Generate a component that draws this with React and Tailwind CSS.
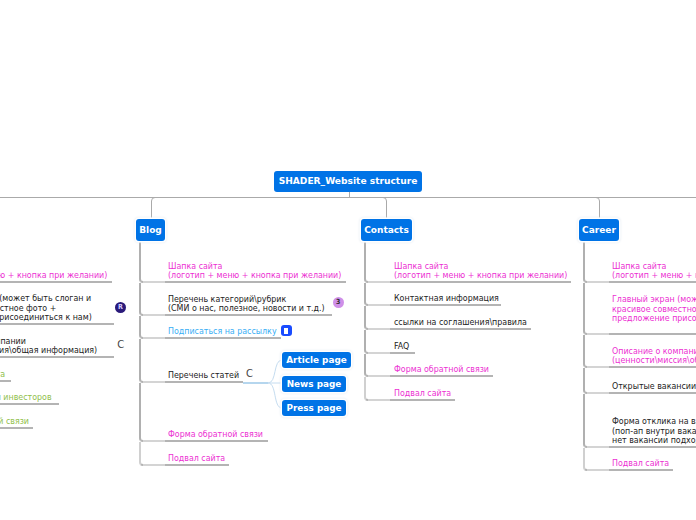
const PINK = "text-[#ec2fd2]";
const DARK = "text-[#222222]";
const BLUE = "text-[#38aef5]";
const GREEN = "text-[#8fc04a]";

const HEAD = ["Шапка сайта", "(логотип + меню + кнопка при желании)"];
const HERO = ["Главный экран (может быть слоган и", "красивое совместное фото +", "предложение присоединиться к нам)"];
const ABOUT = ["Описание о компании", "(ценности\\миссия\\общая информация)"];

// each row: underline y, underline end x, colour, lines, and a trailing mark where there is one
const branches = [
  {
    key: "home",
    t: -95,
    rows: [
      { y: 283, e: 112, c: PINK, lines: HEAD },
      { y: 325, e: 114, c: DARK, lines: HERO, mark: "R" },
      { y: 358, e: 114, c: DARK, lines: ABOUT, mark: "C2" },
      { y: 382, e: 11, c: GREEN, lines: ["Новости проекта"] },
      { y: 405, e: 59, c: GREEN, lines: ["Рекомендациям инвесторов"] },
      { y: 429, e: 33, c: GREEN, lines: ["Форма обратной связи"] },
    ],
  },
  {
    key: "blog",
    t: 139,
    rows: [
      { y: 283, e: 346, c: PINK, lines: HEAD },
      { y: 316, e: 332, c: DARK, lines: ["Перечень категорий\\рубрик", "(СМИ о нас, полезное, новости и т.д.)"], mark: "3" },
      { y: 339, e: 281, c: BLUE, lines: ["Подписаться на рассылку"], mark: "B" },
      { y: 383, e: 243, c: DARK, lines: ["Перечень статей"], mark: "C" },
      { y: 442, e: 268, c: PINK, lines: ["Форма обратной связи"] },
      { y: 466, e: 229, c: PINK, lines: ["Подвал сайта"] },
    ],
  },
  {
    key: "contacts",
    t: 364,
    wide: true,
    rows: [
      { y: 283, e: 571, c: PINK, lines: HEAD },
      { y: 306, e: 501, c: DARK, lines: ["Контактная информация"] },
      { y: 330, e: 531, c: DARK, lines: ["ссылки на соглашения\\правила"] },
      { y: 354, e: 415, c: DARK, lines: ["FAQ"] },
      { y: 377, e: 493, c: PINK, lines: ["Форма обратной связи"] },
      { y: 401, e: 455, c: PINK, lines: ["Подвал сайта"] },
    ],
  },
  {
    key: "career",
    t: 583,
    rows: [
      { y: 283, e: 810, c: PINK, lines: HEAD },
      { y: 335, e: 810, c: PINK, lines: HERO, tall: true },
      { y: 368, e: 810, c: PINK, lines: ABOUT },
      { y: 394, e: 780, c: DARK, lines: ["Открытые вакансии"] },
      { y: 448, e: 810, c: DARK, lines: ["Форма отклика на вакансию", "(поп-ап внутри вакансии, а если", "нет вакансии подходящей)"] },
      { y: 471, e: 673, c: PINK, lines: ["Подвал сайта"] },
    ],
  },
];

function Mark({ kind }) {
  if (kind === "R")
    return <div className="absolute bottom-[10px] left-full ml-[1px] flex h-[11px] w-[11px] items-center justify-center rounded-full bg-[#2a1a7a] text-[7px] font-bold leading-none text-[#d9d0ff]">R</div>;
  if (kind === "3")
    return <div className="mb-[6px] ml-[8px] flex h-[11px] w-[11px] shrink-0 items-center justify-center rounded-full bg-[#cf8fe8] text-[7px] font-bold leading-none text-[#333333]">3</div>;
  if (kind === "B")
    return (
      <div className="mb-[1px] ml-[4px] flex h-[11px] w-[11px] shrink-0 items-center justify-center rounded-[3px] bg-[#1a4cff]">
        <div className="h-[6px] w-[4px] bg-white" />
      </div>
    );
  if (kind === "C2") return <div className="mb-[6px] ml-[20px] text-[11px] leading-[10px] text-[#444444]">C</div>;
  return <div className="mb-[2px] ml-[7px] text-[11px] leading-[10px] text-[#444444]">C</div>;
}

function Row({ row, prev, last, t, wide }) {
  return (
    <div
      className={`relative flex items-end whitespace-nowrap rounded-bl-[4px] border-b-2 border-l-2 border-b-[#b4b4b4] ${wide ? "pl-[28px]" : "pl-[27px]"} ${last ? "border-l-[#d0d0d0]" : "border-l-[#b0b0b0]"} ${row.tall ? "pb-[9px]" : "pb-0"} ${row.c}`}
      style={{ height: row.y - prev, width: row.e - t }}
    >
      <div className="text-[8.8px] leading-[9.7px]">
        {row.lines.map((l) => (
          <div key={l}>{l}</div>
        ))}
      </div>
      {row.mark && <Mark kind={row.mark} />}
      <div className="absolute bottom-[-2px] left-[2px] h-[2px] w-[22px] bg-[#d4d4d4]" />
    </div>
  );
}

function Branch({ b }) {
  return (
    <div className="absolute top-[241px] flex flex-col" style={{ left: b.t }}>
      {b.rows.map((row, i) => (
        <Row key={i} row={row} prev={i === 0 ? 241 : b.rows[i - 1].y} last={i === b.rows.length - 1} t={b.t} wide={b.wide} />
      ))}
    </div>
  );
}

const NODE = "flex items-center justify-center rounded-[3px] bg-[#0073e6] pt-[1px] font-bold text-white whitespace-nowrap font-['DejaVu_Sans',sans-serif]";
const HALO = "shadow-[0_0_0_1.5px_#ffffff,0_0_3px_1px_#d4dfea]";

export default function App() {
  return (
    <div className="relative h-[520px] w-[696px] overflow-hidden bg-white font-['DejaVu_Sans_Condensed','DejaVu_Sans',sans-serif]">
      <svg className="absolute left-0 top-0" width="696" height="520" fill="none">
        <path d="M0 197.5H696" stroke="#aaaaaa" />
        <path d="M349.5 192V197" stroke="#aaaaaa" />
        <path d="M151.5 218V201Q151.5 197.5 155 197.5" stroke="#aaaaaa" />
        <path d="M386.5 218V201Q386.5 197.5 383 197.5" stroke="#aaaaaa" />
        <path d="M599.5 218V201Q599.5 197.5 596 197.5" stroke="#aaaaaa" />
        <path d="M243 383H268" stroke="#b5d6ee" strokeWidth="2" />
        <path d="M268 383C277 383 273 360 282 360M268 383H282M268 383C277 383 273 408 282 408" stroke="#c4dcf0" />
      </svg>

      {branches.map((b) => (
        <Branch key={b.key} b={b} />
      ))}

      <div className={`absolute left-[274px] top-[171px] h-[21px] w-[148px] text-[9.1px] ${NODE}`}>SHADER_Website structure</div>
      <div className={`absolute left-[136px] top-[219px] h-[22px] w-[29px] text-[9px] ${NODE} ${HALO}`}>Blog</div>
      <div className={`absolute left-[361px] top-[219px] h-[22px] w-[51px] text-[9px] ${NODE} ${HALO}`}>Contacts</div>
      <div className={`absolute left-[579px] top-[219px] h-[22px] w-[40px] text-[9px] ${NODE} ${HALO}`}>Career</div>

      <div className="absolute left-[282px] top-[352px] flex flex-col items-start gap-[8px] text-[8.85px]">
        <div className={`h-[16px] w-[69px] ${NODE} ${HALO}`}>Article page</div>
        <div className={`h-[16px] w-[64px] ${NODE} ${HALO}`}>News page</div>
        <div className={`h-[16px] w-[64px] ${NODE} ${HALO}`}>Press page</div>
      </div>
    </div>
  );
}
